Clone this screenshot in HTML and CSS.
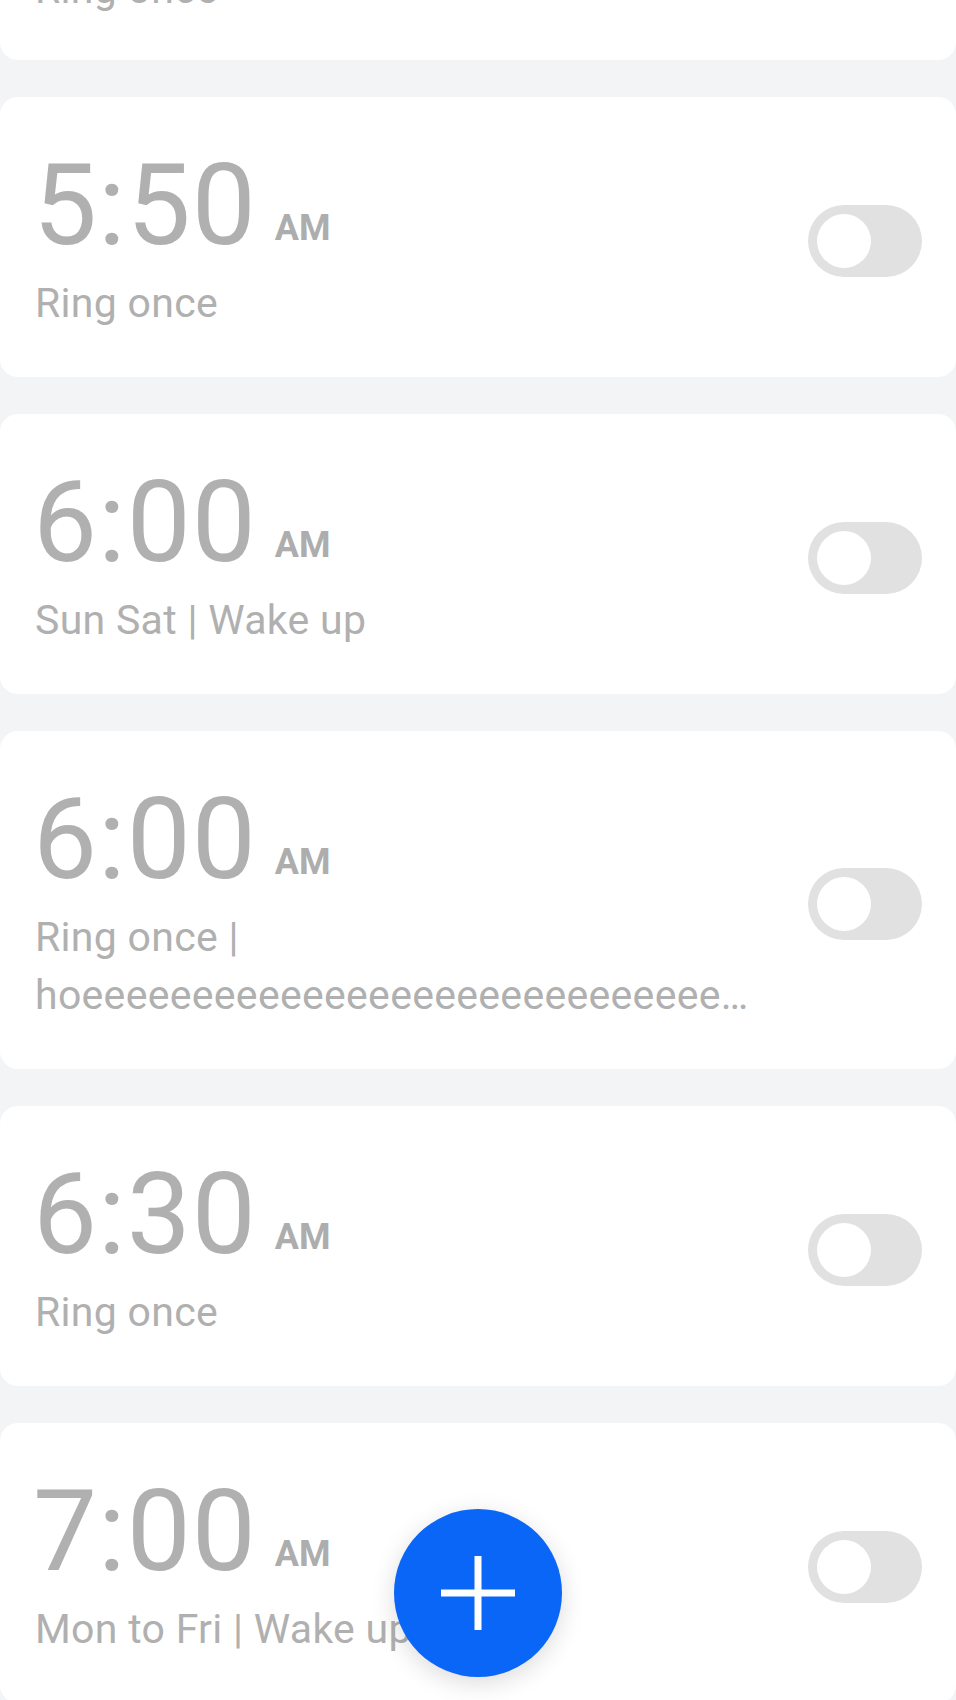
FILE: index.html
```html
<!DOCTYPE html>
<html lang="en">
<head>
    <meta charset="utf-8">
    <title>Alarms</title>
    <link rel="stylesheet" href="styles.css">
</head>
<body>
    <div class="screen">
        <div class="alarm-list">
            <div class="alarm">
                <div class="info">
                    <div class="time">5:30<span class="ampm">AM</span></div>
                    <div class="label">Ring once</div>
                </div>
                <div class="switch"><span class="knob"></span></div>
            </div>
            <div class="alarm">
                <div class="info">
                    <div class="time">5:50<span class="ampm">AM</span></div>
                    <div class="label">Ring once</div>
                </div>
                <div class="switch"><span class="knob"></span></div>
            </div>
            <div class="alarm">
                <div class="info">
                    <div class="time">6:00<span class="ampm">AM</span></div>
                    <div class="label">Sun Sat | Wake up</div>
                </div>
                <div class="switch"><span class="knob"></span></div>
            </div>
            <div class="alarm">
                <div class="info">
                    <div class="time">6:00<span class="ampm">AM</span></div>
                    <div class="label">Ring once |</div>
                    <div class="label">hoeeeeeeeeeeeeeeeeeeeeeeeeeeeeeeeeeeeeeeeeeeeeeeeeeeee</div>
                </div>
                <div class="switch"><span class="knob"></span></div>
            </div>
            <div class="alarm">
                <div class="info">
                    <div class="time">6:30<span class="ampm">AM</span></div>
                    <div class="label">Ring once</div>
                </div>
                <div class="switch"><span class="knob"></span></div>
            </div>
            <div class="alarm">
                <div class="info">
                    <div class="time">7:00<span class="ampm">AM</span></div>
                    <div class="label">Mon to Fri | Wake up</div>
                </div>
                <div class="switch"><span class="knob"></span></div>
            </div>
        </div>

        <button class="fab" type="button" aria-label="Add alarm">
            <svg width="74" height="74" viewBox="0 0 74 74">
                <path d="M37 0 V74 M0 37 H74" stroke="#fff" stroke-width="7" fill="none"/>
            </svg>
        </button>
    </div>
</body>
</html>
```

FILE: styles.css
```css
body {
    margin: 0;
    font-family: Roboto, "Noto Sans", Arial, sans-serif;
    background: #f3f4f6;
}

.screen {
    position: relative;
    height: 1700px;
    overflow: hidden;
    background: #f3f4f6;
}

/* list is scrolled: first card is only partly visible */
.alarm-list {
    display: flex;
    flex-direction: column;
    gap: 37px;
    margin-top: -220px;
}

.alarm {
    display: flex;
    align-items: center;
    background: #fff;
    border-radius: 18px;
    padding: 52px 34px 45px 35px;
}

.alarm:first-child {
    padding-bottom: 42px;
    padding-top: 55px;
}

.info {
    flex: 1;
    min-width: 0;
    margin-right: 58px;
}

.time {
    font-size: 114px;
    line-height: 112px;
    letter-spacing: 1px;
    color: #b0b0b0;
    margin-bottom: 13px;
    margin-left: -2px;
    white-space: nowrap;
}

.ampm {
    font-size: 36px;
    line-height: 1;
    letter-spacing: 0;
    font-weight: bold;
    margin-left: 18px;
    vertical-align: 4px;
    color: #adadad;
}

.label {
    font-size: 41px;
    line-height: 58px;
    letter-spacing: 0.3px;
    color: #b0b0b0;
    white-space: nowrap;
    overflow: hidden;
    text-overflow: ellipsis;
}

.switch {
    flex: none;
    width: 114px;
    height: 72px;
    border-radius: 36px;
    background: #e1e1e1;
    display: flex;
    align-items: center;
    padding-left: 9px;
    box-sizing: border-box;
}

.knob {
    width: 54px;
    height: 54px;
    border-radius: 50%;
    background: #fff;
}

.fab {
    position: absolute;
    left: 50%;
    bottom: 23px;
    margin-left: -84px;
    width: 168px;
    height: 168px;
    border: none;
    border-radius: 50%;
    background: #0a66f6;
    box-shadow: 0 6px 24px rgba(0, 0, 0, 0.14);
    display: flex;
    align-items: center;
    justify-content: center;
    padding: 0;
}
```
